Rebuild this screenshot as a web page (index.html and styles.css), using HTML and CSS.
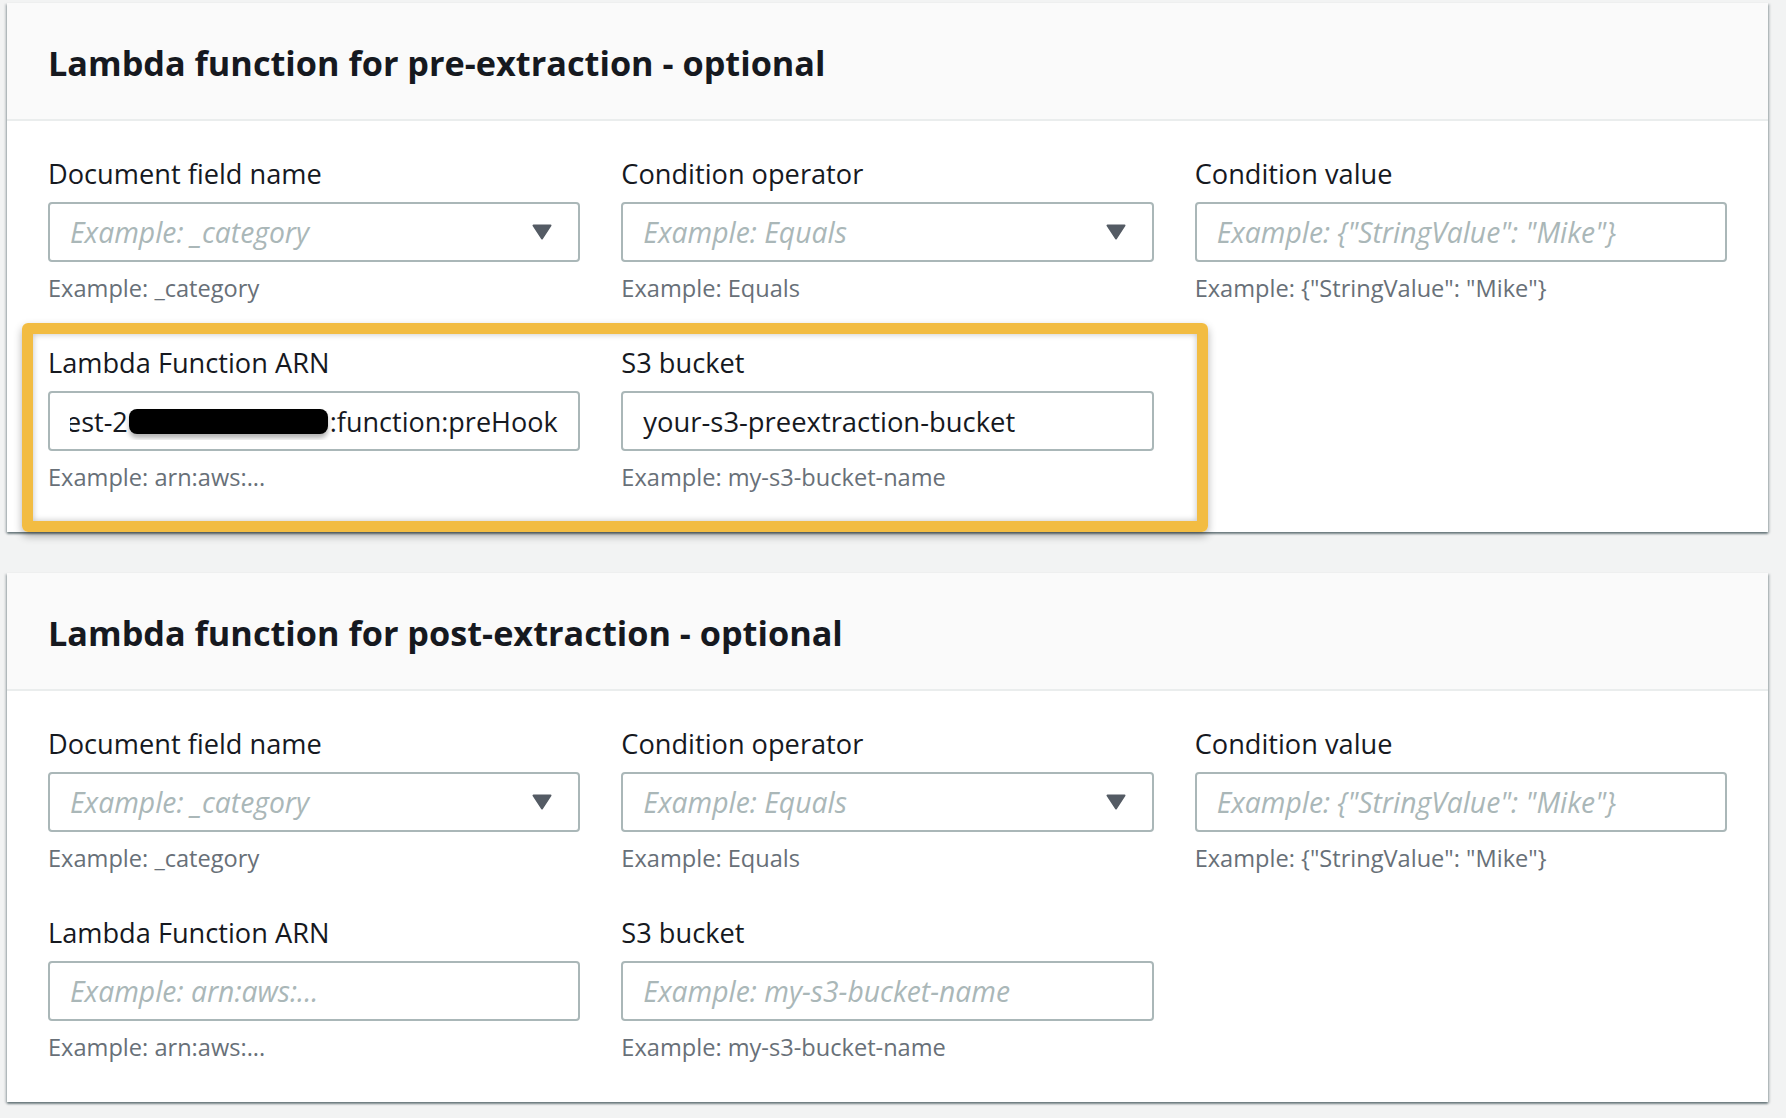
FILE: index.html
```html
<!DOCTYPE html>
<html lang="en">
<head>
<meta charset="utf-8">
<title>Lambda functions</title>
<link rel="stylesheet" href="styles.css">
</head>
<body>
<div class="page">
  <section class="panel">
    <header class="panel-header"><h2 class="panel-title">Lambda function for pre-extraction - optional</h2></header>
    <div class="panel-body">
      <div class="grid">
        <div class="field">
          <label class="label">Document field name</label>
          <div class="control select"><span class="placeholder">Example: _category</span><svg class="caret" width="20" height="16" viewBox="0 0 20 16"><path d="M1.5 1.5h17L10 14.5z" fill="#545b64" stroke="#545b64" stroke-width="2" stroke-linejoin="round"/></svg></div>
          <div class="hint">Example: _category</div>
        </div>
        <div class="field">
          <label class="label">Condition operator</label>
          <div class="control select"><span class="placeholder">Example: Equals</span><svg class="caret" width="20" height="16" viewBox="0 0 20 16"><path d="M1.5 1.5h17L10 14.5z" fill="#545b64" stroke="#545b64" stroke-width="2" stroke-linejoin="round"/></svg></div>
          <div class="hint">Example: Equals</div>
        </div>
        <div class="field">
          <label class="label">Condition value</label>
          <div class="control"><span class="placeholder">Example: {"StringValue": "Mike"}</span></div>
          <div class="hint">Example: {"StringValue": "Mike"}</div>
        </div>
      </div>
      <div class="grid row-second highlighted">
        <div class="field">
          <label class="label">Lambda Function ARN</label>
          <div class="control"><div class="clip"><span class="scrolled">est-2</span><span class="redact"></span><span class="value">:function:preHook</span></div></div>
          <div class="hint">Example: arn:aws:...</div>
        </div>
        <div class="field">
          <label class="label">S3 bucket</label>
          <div class="control"><span class="value">your-s3-preextraction-bucket</span></div>
          <div class="hint">Example: my-s3-bucket-name</div>
        </div>
        <div class="highlight"></div>
      </div>
    </div>
  </section>

  <section class="panel">
    <header class="panel-header"><h2 class="panel-title">Lambda function for post-extraction - optional</h2></header>
    <div class="panel-body">
      <div class="grid">
        <div class="field">
          <label class="label">Document field name</label>
          <div class="control select"><span class="placeholder">Example: _category</span><svg class="caret" width="20" height="16" viewBox="0 0 20 16"><path d="M1.5 1.5h17L10 14.5z" fill="#545b64" stroke="#545b64" stroke-width="2" stroke-linejoin="round"/></svg></div>
          <div class="hint">Example: _category</div>
        </div>
        <div class="field">
          <label class="label">Condition operator</label>
          <div class="control select"><span class="placeholder">Example: Equals</span><svg class="caret" width="20" height="16" viewBox="0 0 20 16"><path d="M1.5 1.5h17L10 14.5z" fill="#545b64" stroke="#545b64" stroke-width="2" stroke-linejoin="round"/></svg></div>
          <div class="hint">Example: Equals</div>
        </div>
        <div class="field">
          <label class="label">Condition value</label>
          <div class="control"><span class="placeholder">Example: {"StringValue": "Mike"}</span></div>
          <div class="hint">Example: {"StringValue": "Mike"}</div>
        </div>
      </div>
      <div class="grid row-second">
        <div class="field">
          <label class="label">Lambda Function ARN</label>
          <div class="control"><span class="placeholder">Example: arn:aws:...</span></div>
          <div class="hint">Example: arn:aws:...</div>
        </div>
        <div class="field">
          <label class="label">S3 bucket</label>
          <div class="control"><span class="placeholder">Example: my-s3-bucket-name</span></div>
          <div class="hint">Example: my-s3-bucket-name</div>
        </div>
      </div>
    </div>
  </section>
</div>
</body>
</html>
```

FILE: styles.css
```css
* { box-sizing: border-box; }
html, body { margin: 0; padding: 0; }
body {
  background: #f2f3f3;
  font-family: "Open Sans", "Noto Sans", sans-serif;
  color: #16191f;
}
.page {
  padding: 3px 18px 16px 7px;
  display: flex;
  flex-direction: column;
  gap: 41px;
}
.panel {
  background: #ffffff;
  box-shadow: 0 2px 2px rgba(0, 28, 36, 0.45), 2px 1px 2px rgba(0, 28, 36, 0.15), -2px 1px 2px rgba(0, 28, 36, 0.15);
}
.panel-header {
  height: 118px;
  background: #fafafa;
  border-bottom: 2px solid #eaeded;
  display: flex;
  align-items: center;
  padding: 2px 41px 0;
}
.panel-title {
  margin: 0;
  font-size: 34.25px;
  font-weight: 700;
  color: #16191f;
  letter-spacing: 0;
}
.panel-body {
  padding: 35px 41px 40px;
  display: flex;
  flex-direction: column;
  gap: 42px;
}
.grid {
  display: grid;
  grid-template-columns: 1fr 1fr 1fr;
  column-gap: 41px;
}
.row-second { position: relative; }
.field { display: flex; flex-direction: column; min-width: 0; }
.label {
  font-size: 27.2px;
  line-height: 36px;
  margin-bottom: 10px;
  color: #16191f;
}
.control {
  height: 60px;
  border: 2px solid #aab7b8;
  border-radius: 4px;
  background: #fff;
  display: flex;
  align-items: center;
  padding: 0 19px 0 20px;
  font-size: 27.4px;
  white-space: nowrap;
  overflow: hidden;
}
.select { justify-content: space-between; padding-right: 26px; }
.placeholder {
  font-style: italic;
  font-size: 28.3px;
  color: #aab7b8;
}
.value { color: #16191f; }
.caret { flex: none; }
.hint {
  margin-top: 11px;
  font-size: 23.6px;
  line-height: 30px;
  color: #687078;
}
.clip {
  display: flex;
  align-items: center;
  overflow: hidden;
  white-space: nowrap;
  flex: 1;
  font-size: 27px;
}
.scrolled { margin-left: -4px; color: #16191f; }
.redact {
  flex: none;
  width: 199px;
  height: 25px;
  margin-left: 1px;
  margin-right: 2px;
  background: #000;
  border-radius: 8px;
  box-shadow: 0 4px 5px rgba(0, 0, 0, 0.3);
}
.highlight {
  position: absolute;
  left: -26px;
  top: -22px;
  width: 1186px;
  height: 209px;
  border: 11px solid #f2bc42;
  border-radius: 6px;
  box-shadow: 0 4px 8px rgba(0, 0, 0, 0.3), inset 0 0 6px rgba(0, 0, 0, 0.25);
  pointer-events: none;
}
```
